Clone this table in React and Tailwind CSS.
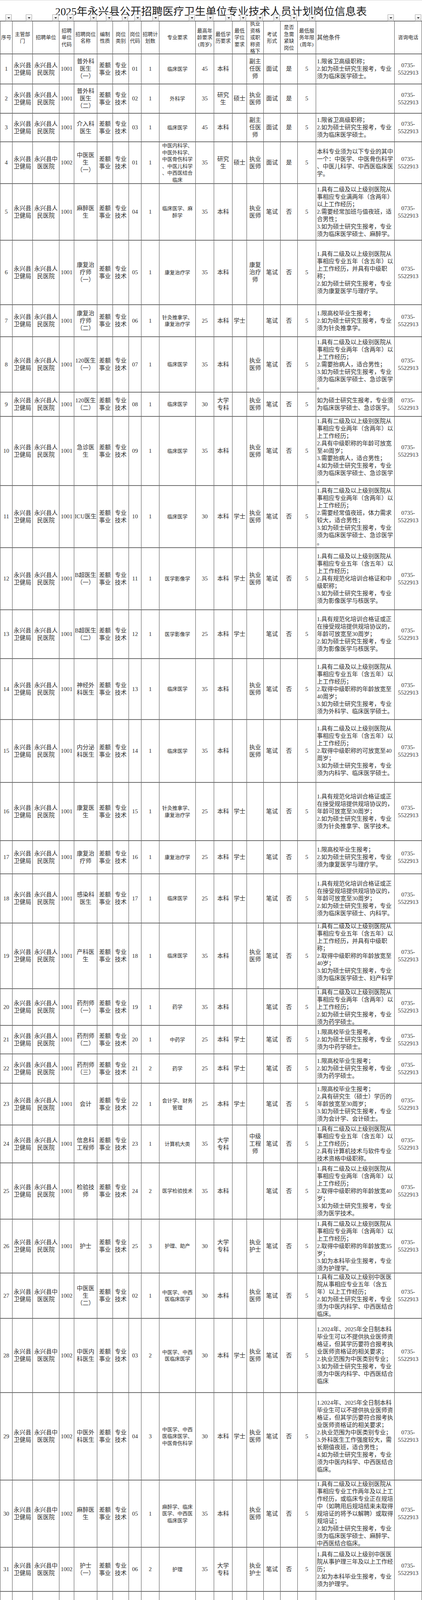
import React from "react";

var COLS =
  "grid grid-cols-[32px_52px_68px_38px_59px_40px_41px_32px_46px_93px_47px_47px_37px_43px_43px_44px_47px_201px_70px]";

var UNITS = {
  "1001": "永兴县人\n民医院",
  "1002": "永兴县中\n医医院",
  "1003": "永兴县第\n二人民医\n院",
  "1004": "永兴县疾\n控中心",
  "1005": "永兴县妇\n幼保健计\n划生育服\n务中心",
  "1006": "基层医疗\n卫生单位",
};

var HEAD = [
  "序号",
  "主管部\n门",
  "招聘单位",
  "招聘\n单位\n代码",
  "招聘岗位\n名称",
  "编制\n性质",
  "岗位\n类别",
  "岗位\n代码",
  "招聘计\n划数",
  "专业要求",
  "最高年\n龄要求\n(周岁)",
  "最低学\n历要求",
  "最低\n学位\n要求",
  "执业\n资格\n或职\n称资\n格下",
  "考试\n形式",
  "是否\n急需\n紧缺\n岗位",
  "最低服\n务年限\n(周年)",
  "其他条件",
  "咨询电话",
];

// no, unit, post, code, num, major, age, edu, degree, cert, exam, urgent, years, other, height
var ROWS = [
  [1, "1001", "普外科\n医生\n（一）", "01", "1", "临床医学", "45", "本科", "", "副主\n任医\n师", "面试", "是", "5", "1.限省卫高级职称；\n2.如为硕士研究生报考，专业\n须为临床医学硕士。", "h-[77px]"],
  [2, "1001", "普外科\n医生\n（二）", "02", "1", "外科学", "35", "研究\n生", "硕士", "执业\n医师", "面试", "是", "5", "", "h-[75px]"],
  [3, "1001", "介入科\n医生", "03", "1", "临床医学", "45", "本科", "", "副主\n任医\n师", "面试", "是", "5", "1.限省卫高级职称；\n2.如为硕士研究生报考，专业\n须为临床医学硕士。", "h-[73px]"],
  [4, "1002", "中医医\n生\n（一）", "01", "1", "中医内科学、\n中医外科学、\n中医骨伤科学\n、中医儿科学\n、中西医结合\n临床", "35", "研究\n生", "硕士", "执业\n医师", "面试", "是", "5", "本科专业须为以下专业的其中\n一个：中医学、中医骨伤科学\n、中医儿科学、中西医临床医\n学。", "h-[107px]"],
  [5, "1001", "麻醉医\n生", "04", "1", "临床医学、麻\n醉学", "35", "本科", "", "执业\n医师", "笔试", "否", "5", "1.具有二级及以上级别医院从\n事相应专业满两年（含两年）\n以上工作经历；\n2.需要经常加班与值夜班，适\n合男性；\n3.如为硕士研究生报考，专业\n须为临床医学硕士、麻醉学。", "h-[145px]"],
  [6, "1001", "康复治\n疗师\n（一）", "05", "1", "康复治疗学", "35", "本科", "", "康复\n治疗\n师", "笔试", "否", "5", "1.具有二级及以上级别医院从\n事相应专业五年（含五年）以\n上工作经历，并具有中级职\n称；\n2.如为硕士研究生报考，专业\n须为康复医学与理疗学。", "h-[165px]"],
  [7, "1001", "康复治\n疗师\n（二）", "06", "1", "针灸推拿学、\n康复治疗学", "25", "本科", "学士", "", "笔试", "否", "5", "1.限高校毕业生报考；\n2.如为硕士研究生报考，专业\n须为针灸推拿学。", "h-[82px]"],
  [8, "1001", "120医生\n（一）", "07", "1", "临床医学", "35", "本科", "", "执业\n医师", "笔试", "否", "5", "1.具有二级及以上级别医院从\n事相应专业两年（含两年）以\n上工作经历；\n2.需要抬病人，适合男性；\n3.如为硕士研究生报考，专业\n须为临床医学硕士、急诊医学\n。", "h-[142px]"],
  [9, "1001", "120医生\n（二）", "08", "1", "临床医学", "30", "大学\n专科", "", "执业\n医师", "笔试", "否", "5", "如为硕士研究生报考，专业须\n为临床医学硕士、急诊医学。", "h-[62px]"],
  [10, "1001", "急诊医\n生", "09", "1", "临床医学", "35", "本科", "", "执业\n医师", "笔试", "否", "5", "1.具有二级及以上级别医院从\n事相应专业两年（含两年）以\n上工作经历；\n2.具有中级职称的年龄可放宽\n至40周岁；\n3.需要抬病人，适合男性；\n4.如为硕士研究生报考，专业\n须为临床医学硕士、急诊医学\n。", "h-[177px]"],
  [11, "1001", "ICU医生", "10", "1", "临床医学", "30", "本科", "学士", "执业\n医师", "笔试", "否", "5", "1.具有二级及以上级别医院从\n事相应专业两年（含两年）以\n上工作经历；\n2.需要经常值夜班，体力需求\n较大，适合男性；\n3.如为硕士研究生报考，专业\n须为临床医学硕士、急诊医学\n。", "h-[159px]"],
  [12, "1001", "B超医生\n（一）", "11", "1", "医学影像学", "35", "本科", "学士", "执业\n医师", "笔试", "否", "5", "1.具有二级及以上级别医院从\n事相应专业五年（含五年）以\n上工作经历；\n2.具有规范化培训合格证和中\n级职称；\n3.如为硕士研究生报考，专业\n须为影像医学与核医学。", "h-[159px]"],
  [13, "1001", "B超医生\n（二）", "12", "1", "医学影像学", "25", "本科", "学士", "", "笔试", "否", "5", "1.具有规范化培训合格证或正\n在接受规培提供规培协议的，\n年龄可放宽至30周岁；\n2.如为硕士研究生报考，专业\n须为影像医学与核医学。", "h-[125px]"],
  [14, "1001", "神经外\n科医生", "13", "1", "临床医学", "35", "本科", "", "执业\n医师", "笔试", "否", "5", "1.具有二级及以上级别医院从\n事相应专业五年（含五年）以\n上工作经历；\n2.取得中级职称的年龄放宽至\n40周岁；\n3.如为硕士研究生报考，专业\n须为外科学、临床医学硕士。", "h-[156px]"],
  [15, "1001", "内分泌\n科医生", "14", "1", "临床医学", "35", "本科", "", "执业\n医师", "笔试", "否", "5", "1.具有二级及以上级别医院从\n事相应专业五年（含五年）以\n上工作经历；\n2.取得中级职称的可放宽至40\n周岁；\n3.如为硕士研究生报考，专业\n须为内科学、临床医学硕士。", "h-[161px]"],
  [16, "1001", "康复医\n生", "15", "1", "针灸推拿学、\n康复治疗学", "25", "本科", "学士", "", "笔试", "否", "5", "1.具有规范化培训合格证或正\n在接受规培提供规培协议的，\n年龄可放宽至30周岁；\n2.如为硕士研究生报考，专业\n须为针灸推拿学、医学技术。", "h-[149px]"],
  [17, "1001", "康复治\n疗师", "16", "1", "康复治疗学", "25", "本科", "学士", "", "笔试", "否", "5", "1.限高校毕业生报考；\n2.如为硕士研究生报考，专业\n须为康复医学与理疗学。", "h-[85px]"],
  [18, "1001", "感染科\n医生", "17", "1", "临床医学", "25", "本科", "学士", "", "笔试", "否", "5", "1.具有规范化培训合格证或正\n在接受规培提供规培协议的，\n年龄可放宽至30周岁；\n2.如为硕士研究生报考，专业\n须为临床医学硕士、内科学。", "h-[126px]"],
  [19, "1001", "产科医\n生", "18", "1", "临床医学", "35", "本科", "", "执业\n医师", "笔试", "否", "5", "1.具有二级及以上级别医院从\n事相应专业五年（含五年）以\n上工作经历，并具有中级职\n称；\n2.取得中级职称的年龄放宽至\n40岁；\n3.如为硕士研究生报考，专业\n须为临床医学硕士、妇产科学\n。", "h-[168px]"],
  [20, "1001", "药剂师\n（一）", "19", "1", "药学", "35", "本科", "", "", "笔试", "否", "5", "1.具有二级及以上级别医院从\n事相应专业两年（含两年）以\n上工作经历；\n2.如为硕士研究生报考，专业\n须为药学硕士。", "h-[94px]"],
  [21, "1001", "药剂师\n（二）", "20", "1", "中药学", "25", "本科", "学士", "", "笔试", "否", "5", "1.限高校毕业生报考。\n2.如为硕士研究生报考，专业\n须为中药学硕士。", "h-[73px]"],
  [22, "1001", "药剂师\n（三）", "21", "2", "药学", "25", "本科", "学士", "", "笔试", "否", "5", "1.限高校毕业生报考；\n2.如为硕士研究生报考，专业\n须为药学硕士。", "h-[75px]"],
  [23, "1001", "会计", "22", "1", "会计学、财务\n管理", "25", "本科", "学士", "", "笔试", "否", "5", "1.限高校毕业生报考；\n2.具有研究生（硕士）学历的\n年龄放宽至30周岁；\n3.如为硕士研究生报考，专业\n须为会计学、会计硕士。", "h-[107px]"],
  [24, "1001", "信息科\n工程师", "23", "1", "计算机大类", "35", "大学\n专科", "", "中级\n工程\n师", "笔试", "否", "5", "1.具有二级及以上级别医院从\n事相应专业五年（含五年）以\n上工作经历；\n2.具有计算机技术与软件专业\n技术资格中级职称。", "h-[97px]"],
  [25, "1001", "检验技\n师", "24", "2", "医学检验技术", "35", "本科", "", "", "笔试", "否", "5", "1.具有二级及以上级别医院从\n事相应专业两年（含两年）以\n上工作经历；\n2.取得中级职称的年龄放宽40\n岁；\n3.如为硕士研究生报考，专业\n须为医学技术。", "h-[144px]"],
  [26, "1001", "护士", "25", "3", "护理、助产", "30", "大学\n专科", "", "执业\n护士", "笔试", "否", "5", "1.具有二级及以上级别医院从\n事相应专业两年（含两年）以\n上工作经历；\n2.取得中级职称的年龄放宽35\n岁；\n3.如为本科毕业生报考，专业\n须为护理学。", "h-[138px]"],
  [27, "1002", "中医医\n生\n（二）", "02", "1", "中医学、中西\n医临床医学", "30", "本科", "", "执业\n医师", "笔试", "否", "5", "1.具有二级及以上级别中医医\n院从事相应专业五年（含五\n年）以上工作经历；\n2.如为硕士研究生报考，专业\n须为中医内科学、中西医结合\n临床。", "h-[116px]"],
  [28, "1002", "中医内\n科医生", "03", "2", "中医学、中西\n医临床医学", "30", "本科", "学士", "执业\n医师", "笔试", "否", "5", "1.2024年、2025年全日制本科\n毕业生可以不提供执业医师资\n格证，但其学历要符合报考执\n业医师资格证的相关要求；\n2.执业范围为中医类别专业；\n3.如为硕士研究生报考，专业\n须为中医内科学、中西医结合\n临床", "h-[190px]"],
  [29, "1002", "中医外\n科医生", "04", "3", "中医学、中西\n医临床医学、\n中医骨伤科学", "30", "本科", "学士", "执业\n医师", "笔试", "否", "5", "1.2024年、2025年全日制本科\n毕业生可以不提供执业医师资\n格证，但其学历要符合报考执\n业医师资格证的相关要求；\n2.执业范围为中医类别专业；\n3.外科医生工作强度较大，需\n长期值夜班，适合男性；\n4.如为硕士研究生报考，专业\n须为中医内科学、中西医结合\n临床。", "h-[224px]"],
  [30, "1002", "麻醉医\n生", "05", "1", "麻醉学、临床\n医学、中西医\n临床医学", "35", "本科", "", "执业\n医师", "笔试", "否", "5", "1.具有二级及以上级别医院从\n事相应专业工作两年及以上工\n作经历，或临床专业正在规培\n中（如聘用后规培结束未取得\n规培证的将予以解聘）或取得\n规培证；\n2.如为硕士研究生报考，专业\n须为临床医学硕士、麻醉学、\n中西医结合临床。", "h-[172px]"],
  [31, "1002", "护士\n（一）", "06", "2", "护理", "35", "大学\n专科", "", "执业\n护士", "笔试", "否", "5", "1.具有二级及以上级别中医医\n院从事护理三年及以上工作经\n历；\n2.如为本科毕业生报考，专业\n须为护理学。", "h-[113px]"],
  [32, "1002", "护士\n（二）", "07", "1", "护理学", "25", "本科", "学士", "执业\n护士", "笔试", "否", "5", "限高校毕业生报考。", "h-[88px]"],
  [33, "1002", "ICU男护\n士", "08", "1", "护理", "25", "大专", "", "执业\n护士", "笔试", "否", "5", "1.限高校毕业生报考；\n2.如为本科毕业生报考，专业\n须为护理学。", "h-[91px]"],
  [34, "1003", "临床医\n生", "01", "5", "临床医学、中\n西医临床医学", "30", "大学\n专科", "", "执业\n医师", "笔试", "否", "5", "1.2024年、2025年全日制本科\n毕业生可不提供执业医师资格\n证；\n2.取得住院医师规范化培训合\n格证或取得相应专业中级及以\n上职称，年龄放宽到35周岁。", "h-[152px]"],
  [35, "1003", "麻醉医\n生", "02", "1", "麻醉学、临床\n医学", "30", "本科", "", "执业\n医师", "笔试", "否", "5", "1.2024年、2025年全日制本科\n毕业生可不提供执业医师资格\n证；\n2.取得住院医师规范化培训合\n格证或取得相应专业中级及以\n上职称的年龄放宽至35周岁；\n3.如为硕士研究生报考，专业\n须为麻醉学、临床医学硕士。", "h-[192px]"],
  [36, "1004", "传染病\n应急处\n置医师", "01", "1", "预防医学", "30", "本科", "学士", "", "笔试", "否", "5", "1.具有相应执业医师资格者，\n年龄可放宽至35周岁；\n2.该岗位需从事矿井采样等工\n作，适合男性；\n3.如为硕士研究生报考，专业\n须为流行病与卫生统计学、公\n共卫生硕士。", "h-[160px]"],
  [37, "1004", "疾病预\n防控制\n医师", "02", "2", "预防医学", "30", "本科", "学士", "", "笔试", "否", "5", "1.具有相应执业医师资格者，\n年龄可放宽至35周岁；\n2.如为硕士研究生报考，专业\n须为流行病与卫生统计学、公\n共卫生硕士", "h-[128px]"],
  [38, "1004", "会计", "03", "1", "会计学", "25", "本科", "学士", "初级\n会计\n师", "笔试", "否", "5", "1.具有会计师及以上职称者，\n年龄可放宽至35周岁；\n2.如为硕士研究生报考，专业\n须为会计学。", "h-[92px]"],
  [39, "1005", "药剂师", "01", "1", "药学、临床医\n学", "35", "大学\n专科", "", "执业\n药师", "笔试", "否", "5", "须具备卫生类药士以上职称。", "h-[86px]"],
  [40, "1006", "临床医\n生", "01", "1", "临床医学", "35", "大学\n专科", "", "执业\n助理\n医师", "笔试", "否", "3", "", "h-[67px]"],
  [41, "1006", "B超医师", "02", "1", "医学影像技术", "35", "大学\n专科", "", "", "笔试", "否", "3", "", "h-[70px]"],
  [42, "1006", "护士", "03", "7", "护理、助产", "35", "大学\n专科", "", "执业\n护士", "笔试", "否", "3", "1.限高校毕业生报考；\n2.2025年应届毕业生需在2025\n年8月31日前取得护士资格\n证，否则取消聘用资格；\n3.如为本科毕业生报考，专业\n须为护理学、助产学。", "h-[115px]"],
  [43, "1006", "中医理\n疗医生", "04", "3", "针灸推拿", "35", "大学\n专科", "", "", "笔试", "否", "3", "如为本科毕业生报考，专业须\n为针灸推拿学、中医康复学", "h-[80px]"],
  [44, "1006", "会计", "05", "2", "会计电算化、\n会计、财务管\n理", "35", "大学\n专科", "", "", "笔试", "否", "3", "1.限高校毕业生报考；\n2.如为本科毕业生报考，专业\n须为财务管理、会计学。", "h-[110px]"],
  [45, "1006", "疾病预\n防控制\n医师", "06", "1", "预防医学", "35", "大学\n专科", "", "", "笔试", "否", "3", "", "h-[61px]"],
];

function FilterButton() {
  return (
    <span className="flex h-[17px] w-[16px] items-center justify-center border border-[#a3a3a3] bg-gradient-to-b from-white to-[#e4e4e4]">
      <svg width="7" height="4" viewBox="0 0 7 4">
        <path d="M0 0h7L3.5 4z" fill="#3a3a3a" />
      </svg>
    </span>
  );
}

function Cell(props) {
  var i = props.index;
  var base =
    "flex items-center overflow-hidden border-r border-[#4d4d4d] " +
    (i === 0 ? "border-l " : "");
  if (i === 17) {
    return (
      <div className={base + "justify-start pl-[2px]"}>
        <div className="whitespace-pre text-left text-[15px] leading-[19px]">
          {props.text}
        </div>
      </div>
    );
  }
  var size = props.head
    ? "text-[13px] leading-[17.5px]"
    : i === 9
    ? "text-[13px] leading-[17.5px]"
    : "text-[15px] leading-[19px]";
  return (
    <div className={base + "justify-center"}>
      <div className={"whitespace-pre text-center " + size}>{props.text}</div>
    </div>
  );
}

export default function App() {
  return (
    <div className="w-[1080px] bg-white font-['Liberation_Serif','Noto_Sans_CJK_SC',serif] text-[#2b2b2b]">
      <div className="relative h-[55px] border-t border-[#d4d4d4] border-b-2 border-b-[#6a6a6a]">
        <h1 className="pt-[15px] text-center text-[27.5px] leading-[28px] font-normal text-[#222]">
          2025年永兴县公开招聘医疗卫生单位专业技术人员计划岗位信息表
        </h1>
        <div className={COLS + " absolute left-0 top-[36px] w-full"}>
          {HEAD.map(function (h, i) {
            return (
              <div key={i} className="flex justify-end pr-[2px]">
                <FilterButton />
              </div>
            );
          })}
        </div>
      </div>

      <div className={COLS + " h-[84px] border-b-2 border-[#6a6a6a]"}>
        {HEAD.map(function (h, i) {
          return <Cell key={i} index={i} text={h} head={true} />;
        })}
      </div>

      {ROWS.map(function (r) {
        var bz = r[1] === "1004" || r[1] === "1005" ? "全额\n事业" : "差额\n事业";
        var cells = [
          String(r[0]),
          "永兴县\n卫健局",
          UNITS[r[1]],
          r[1],
          r[2],
          bz,
          "专业\n技术",
          r[3],
          r[4],
          r[5],
          r[6],
          r[7],
          r[8],
          r[9],
          r[10],
          r[11],
          r[12],
          r[13],
          "0735-\n5522913",
        ];
        return (
          <div key={r[0]} className={COLS + " border-b-2 border-[#6a6a6a] " + r[14]}>
            {cells.map(function (c, i) {
              return <Cell key={i} index={i} text={c} />;
            })}
          </div>
        );
      })}
    </div>
  );
}
